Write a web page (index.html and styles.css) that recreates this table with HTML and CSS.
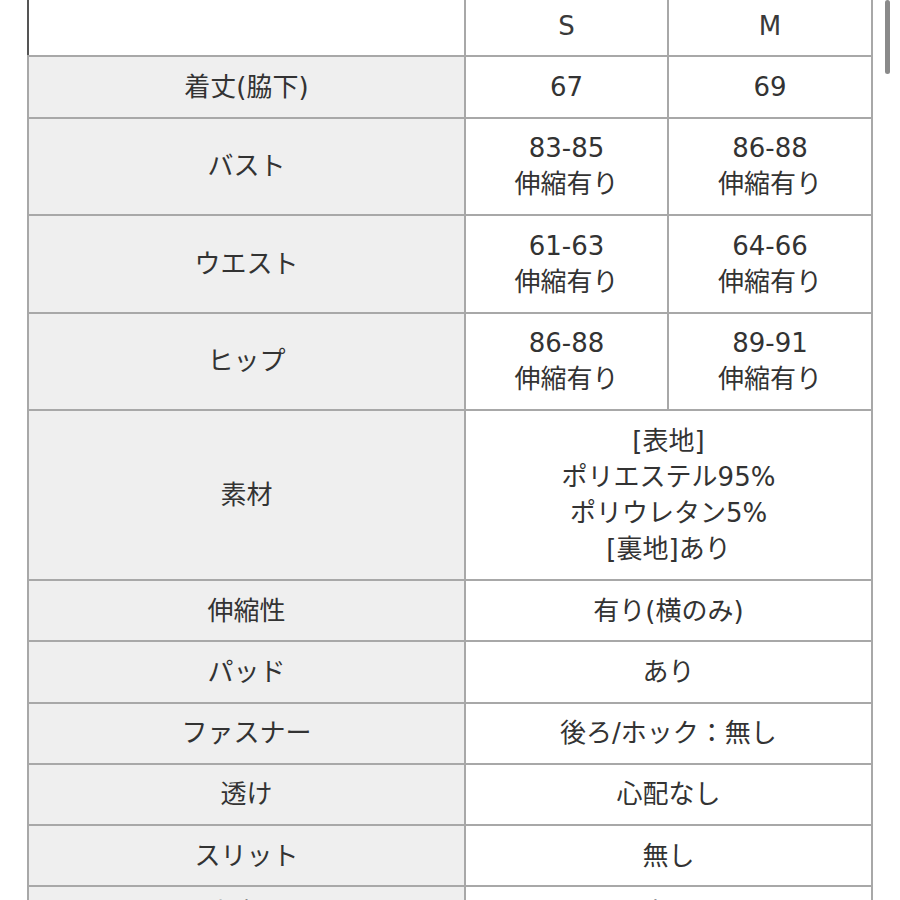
FILE: index.html
```html
<!DOCTYPE html>
<html lang="ja">
<head>
<meta charset="utf-8">
<title>サイズ表</title>
<link rel="stylesheet" href="styles.css">
</head>
<body>
<div class="page">
  <table class="size-table">
    <colgroup>
      <col class="c-label">
      <col class="c-size">
      <col class="c-size2">
    </colgroup>
    <tr class="head">
      <td class="corner"></td>
      <td>S</td>
      <td>M</td>
    </tr>
    <tr>
      <th>着丈(脇下)</th>
      <td>67</td>
      <td>69</td>
    </tr>
    <tr>
      <th>バスト</th>
      <td>83-85<br>伸縮有り</td>
      <td>86-88<br>伸縮有り</td>
    </tr>
    <tr>
      <th>ウエスト</th>
      <td>61-63<br>伸縮有り</td>
      <td>64-66<br>伸縮有り</td>
    </tr>
    <tr>
      <th>ヒップ</th>
      <td>86-88<br>伸縮有り</td>
      <td>89-91<br>伸縮有り</td>
    </tr>
    <tr>
      <th>素材</th>
      <td colspan="2">[表地]<br>ポリエステル95%<br>ポリウレタン5%<br>[裏地]あり</td>
    </tr>
    <tr>
      <th>伸縮性</th>
      <td colspan="2">有り(横のみ)</td>
    </tr>
    <tr>
      <th>パッド</th>
      <td colspan="2">あり</td>
    </tr>
    <tr>
      <th>ファスナー</th>
      <td colspan="2">後ろ/ホック：無し</td>
    </tr>
    <tr>
      <th>透け</th>
      <td colspan="2">心配なし</td>
    </tr>
    <tr>
      <th>スリット</th>
      <td colspan="2">無し</td>
    </tr>
    <tr class="cut">
      <th>生産国</th>
      <td colspan="2">中国</td>
    </tr>
  </table>
</div>
<div class="scrollbar"></div>
</body>
</html>
```

FILE: styles.css
```css
html, body {
  margin: 0;
  padding: 0;
  background: #ffffff;
  overflow: hidden;
}

body {
  font-family: "DejaVu Sans", "Noto Sans CJK JP", sans-serif;
  color: #333333;
}

.page {
  padding-left: 27px;
  height: 900px;
  overflow: hidden;
}

.size-table {
  border-collapse: collapse;
  table-layout: fixed;
  width: 844px;
  margin-top: -6px;
}

.c-label { width: 437px; }
.c-size { width: 203px; }
.c-size2 { width: 204px; }

.size-table th,
.size-table td {
  border: 2px solid #a8a8a8;
  padding: 11.5px 4px;
  font-size: 26px;
  line-height: 36.25px;
  text-align: center;
  vertical-align: middle;
  font-weight: 400;
}

.size-table th {
  background: #efefef;
}

.size-table td {
  background: #ffffff;
}

.size-table .corner {
  border-left-color: #555555;
}

.head td {
  color: #3a3a3a;
}

.cut th,
.cut td {
  padding-top: 8px;
}

.scrollbar {
  position: fixed;
  top: 0;
  right: 10px;
  width: 5px;
  height: 74px;
  border-radius: 3px;
  background: #8a8a8a;
}
```
